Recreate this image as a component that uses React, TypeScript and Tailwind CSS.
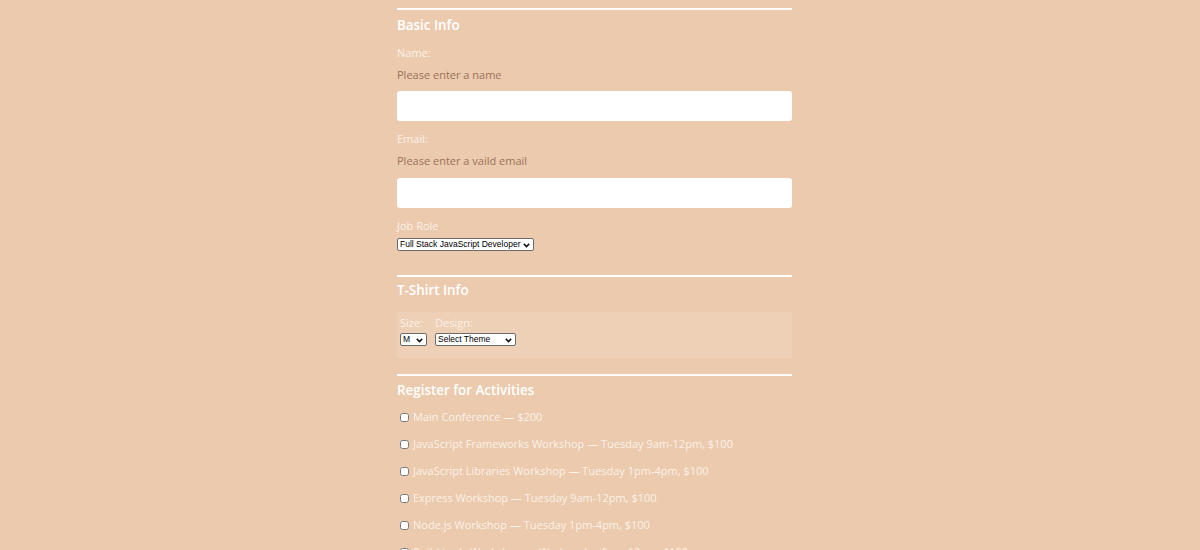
import React from "react";

const activities = [
  "Main Conference — $200",
  "JavaScript Frameworks Workshop — Tuesday 9am-12pm, $100",
  "JavaScript Libraries Workshop — Tuesday 1pm-4pm, $100",
  "Express Workshop — Tuesday 9am-12pm, $100",
  "Node.js Workshop — Tuesday 1pm-4pm, $100",
  "Build tools Workshop — Wednesday 9am-12pm, $100",
  "npm Workshop — Wednesday 1pm-4pm, $100",
];

function Chevron() {
  return (
    <svg width="7" height="5" viewBox="0 0 7 5" className="absolute right-[3px] top-[4px]">
      <path d="M0.8 0.9 L3.5 3.6 L6.2 0.9" fill="none" stroke="#111" strokeWidth="1.5" />
    </svg>
  );
}

function FakeSelect({ text, width }: { text: string; width: string }) {
  return (
    <div
      className={`relative h-[13px] ${width} border border-[#6b6b6b] bg-white rounded-[2px] text-[8.5px] leading-[11px] text-black pl-[2px] overflow-hidden whitespace-nowrap`}
      style={{ fontFamily: '"Liberation Sans", Arial, sans-serif' }}
    >
      {text}
      <Chevron />
    </div>
  );
}

export default function App() {
  return (
    <div
      className="min-h-[550px] w-full bg-[#ebcaae] flex justify-center pr-[11px]"
      style={{ fontFamily: '"Open Sans", "Noto Sans", sans-serif' }}
    >
      <form className="w-[395px] pt-2">
        <fieldset>
          <div className="border-t-2 border-white pt-[6px]">
            <h2 className="text-[13.4px] leading-[18px] font-semibold text-white">Basic Info</h2>
          </div>
          <div className="mt-[11px] text-[11px] leading-[16px] text-[#fbf1e8]">Name:</div>
          <div className="mt-[6px] text-[11px] leading-[16px] text-[#9c7257]">Please enter a name</div>
          <input type="text" className="mt-[8px] block w-full h-[30px] bg-white rounded-[3px] outline-none" />
          <div className="mt-[10px] text-[11px] leading-[16px] text-[#fbf1e8]">Email:</div>
          <div className="mt-[6px] text-[11px] leading-[16px] text-[#9c7257]">Please enter a vaild email</div>
          <input type="email" className="mt-[9px] block w-full h-[30px] bg-white rounded-[3px] outline-none" />
          <div className="mt-[10px] text-[11px] leading-[16px] text-[#fbf1e8]">Job Role</div>
          <div className="mt-[4px]">
            <FakeSelect text="Full Stack JavaScript Developer" width="w-[137px]" />
          </div>
        </fieldset>

        <fieldset className="mt-[24px]">
          <div className="border-t-2 border-white pt-[4px]">
            <h2 className="text-[13.4px] leading-[18px] font-semibold text-white">T-Shirt Info</h2>
          </div>
          <div className="mt-[13px] h-[46px] bg-[#eed0b6] px-[3px] pt-[3px] flex gap-[8px]">
            <div className="flex flex-col">
              <span className="text-[11px] leading-[16px] text-[#fbf1e8]">Size:</span>
              <div className="mt-[2px]">
                <FakeSelect text="M" width="w-[27px]" />
              </div>
            </div>
            <div className="flex flex-col">
              <span className="text-[11px] leading-[16px] text-[#fbf1e8]">Design:</span>
              <div className="mt-[2px]">
                <FakeSelect text="Select Theme" width="w-[81px]" />
              </div>
            </div>
          </div>
        </fieldset>

        <fieldset className="mt-[16px]">
          <div className="border-t-2 border-white pt-[5px]">
            <h2 className="text-[13.4px] leading-[18px] font-semibold text-white">Register for Activities</h2>
          </div>
          <div className="mt-[10px] flex flex-col gap-[11px]">
            {activities.map((a) => (
              <label key={a} className="flex items-center gap-[4px] pl-[3px] text-[11px] leading-[16px] text-[#fbf1e8]">
                <input type="checkbox" className="w-[9px] h-[9px] m-0 appearance-auto" />
                <span>{a}</span>
              </label>
            ))}
          </div>
        </fieldset>
      </form>
    </div>
  );
}
